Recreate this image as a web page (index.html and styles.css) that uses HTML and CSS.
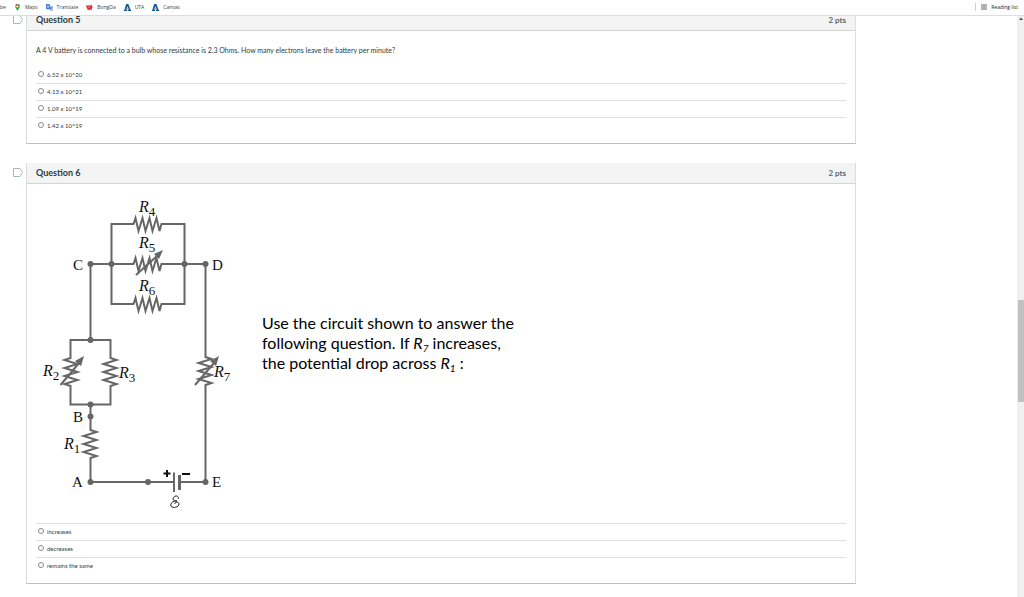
FILE: index.html
```html
<!DOCTYPE html>
<html lang="en">
<head>
    <meta charset="UTF-8">
    <meta name="viewport" content="width=device-width, initial-scale=1.0">
    <title>Quiz</title>
    <link rel="stylesheet" href="styles.css">
</head>
<body>
    <nav class="bookmarks">
        <a href="#" class="bookmark cut">be</a>
        <a href="#" class="bookmark maps">
            <svg class="bookmark-icon" viewBox="0 0 14 16">
                <path d="M7 0a5.500 5.500 0 0 1 5.500 5.500C12.500 9 8.500 11 7 16 5.500 11 1.500 9 1.500 5.500A5.500 5.500 0 0 1 7 0z" fill="#34a853"/>
                <path d="M7 0a5.500 5.500 0 0 1 5.200 3.800L7 5.500z" fill="#4285f4"/>
                <path d="M2.700 2.200L7 5.500 2.600 9C1 6.500 1.200 4 2.700 2.200z" fill="#fbbc04"/>
                <path d="M2.700 2.200A5.500 5.500 0 0 1 7 0v5.500z" fill="#ea4335"/>
                <circle cx="7" cy="5.500" r="2" fill="#fff"/>
            </svg>
            Maps
        </a>
        <a href="#" class="bookmark translate">
            <svg class="bookmark-icon" viewBox="0 0 16 16">
                <path d="M6 4h10v12H9z" fill="#c3cbd8"/>
                <path d="M0 0h8l4 12H0z" fill="#4a80e8"/>
                <path d="M7.500 5.500H4.800v1.200H6.200A2 2 0 1 1 5.800 4.500" fill="none" stroke="#fff"/>
                <path d="M10 8h5M12.500 7v1M14 8c-.5 2-1.500 3-3 4M11.500 9.500l2.500 3" fill="none" stroke="#5f6f88"/>
            </svg>
            Translate
        </a>
        <a href="#" class="bookmark bongda">
            <svg class="bookmark-icon" viewBox="0 0 16 16">
                <path d="M1 3l4 1 2-2 2 2 5-3-1 4 3 2-3 2 1 5-4-2-3 3-2-3-3 1 1-4-3-3z" fill="#e0262c"/>
                <path d="M4 6l3 2 3-2" stroke="#fff" fill="none"/>
            </svg>
            BongDa
        </a>
        <a href="#" class="bookmark uta">
            <svg class="bookmark-icon" viewBox="0 0 16 16">
                <path d="M5 0h5l5 13h1v3H9v-3h2L8 5 5 13h2v3H0v-3h1z" fill="#0b5a9d"/>
                <path d="M8 8l1 2h2l-3 3-3-3h2z" fill="#f08030"/>
            </svg>
            UTA
        </a>
        <a href="#" class="bookmark canvas">
            <svg class="bookmark-icon" viewBox="0 0 16 16">
                <path d="M5 0h5l5 13h1v3H9v-3h2L8 5 5 13h2v3H0v-3h1z" fill="#0b5a9d"/>
                <path d="M8 8l1 2h2l-3 3-3-3h2z" fill="#f08030"/>
            </svg>
            Canvas
        </a>
        <button class="reading-list" type="button">
            <svg class="reading-icon" viewBox="0 0 12 12">
                <path d="M.5.5h11v11H.5z" fill="#d8dade" stroke="#6b6d72"/>
                <path d="M2 4h3M7 4h3M2 8h3M7 8h3M6 1v10" stroke="#55575c"/>
            </svg>
            Reading list
        </button>
    </nav>

    <div class="viewport">
        <main class="quiz">
            <section class="question-row">
                <button class="flag" type="button" aria-label="Flag question 5">
                    <svg viewBox="0 0 10 9"><path d="M.5.5h6.500l2.500 4-2.500 4H.5z"/></svg>
                </button>
                <div class="question">
                    <div class="question-header">
                        <h2>Question 5</h2>
                        <span class="points">2 pts</span>
                    </div>
                    <div class="question-body">
                        <p class="question-text">A 4 V battery is connected to a bulb whose resistance is 2.3 Ohms. How many electrons leave the battery per minute?</p>
                        <div class="answers first-plain">
                            <label class="answer"><input type="radio" name="q5">6.52 x 10^20</label>
                            <label class="answer"><input type="radio" name="q5">4.13 x 10^21</label>
                            <label class="answer"><input type="radio" name="q5">1.09 x 10^19</label>
                            <label class="answer"><input type="radio" name="q5">1.42 x 10^19</label>
                        </div>
                    </div>
                </div>
            </section>

            <section class="question-row">
                <button class="flag" type="button" aria-label="Flag question 6">
                    <svg viewBox="0 0 10 9"><path d="M.5.5h6.500l2.500 4-2.500 4H.5z"/></svg>
                </button>
                <div class="question">
                    <div class="question-header">
                        <h2>Question 6</h2>
                        <span class="points">2 pts</span>
                    </div>
                    <div class="question-body">
                        <div class="figure">
                            <svg class="circuit" viewBox="36 194 204 320">
                                <!-- wires and resistors -->
                                <g class="wire">
                                    <path d="M111.500 264V224H133.500l2-6 3 13 4-13 3 13 4-13 3 13 4-13 3 13 2-7H184.500V304H161.500l-2 7-3-13-4 13-3-13-4 13-3-13-4 13-3-13-2 6H111.500V264"/>
                                    <path d="M90.500 264H133.500l2-6 3 13 4-13 3 13 4-13 3 13 4-13 3 13 2-7H205.500"/>
                                    <path d="M90.500 264V340"/>
                                    <path d="M90.500 340H70.500V358l-6 2 13 4-13 4 13 4-13 4 13 4-13 4 6 2V404.500H110.500V386l6-2-13-4 13-4-13-4 13-4-13-4 13-4-6-2V340H90.500"/>
                                    <path d="M90.500 404.500V430l6 2-13 4 13 4-13 4 13 4-13 4 13 4-6 2V482H173"/>
                                    <path d="M205.500 264V357l6 2-13 4 13 4-13 4 13 4-13 4 13 4-6 2V482H180"/>
                                    <path d="M136 275L157 256M60.500 385L79 363M195 385L214 363"/>
                                    <path d="M174 472.500V492"/>
                                </g>
                                <path class="plate" d="M179.500 475V490"/>
                                <g class="solid">
                                    <path d="M163 250l-4 9-5-5zM84 356l-3 10-6-5zM219 356l-3 10-6-5z"/>
                                    <circle cx="90.500" cy="264" r="3"/>
                                    <circle cx="111.500" cy="264" r="3"/>
                                    <circle cx="184.500" cy="264" r="3"/>
                                    <circle cx="205.500" cy="264" r="3"/>
                                    <circle cx="90.500" cy="340" r="3"/>
                                    <circle cx="90.500" cy="404.500" r="3"/>
                                    <circle cx="90.500" cy="416.500" r="3"/>
                                    <circle cx="90.500" cy="482" r="3"/>
                                    <circle cx="148" cy="482" r="3"/>
                                    <circle cx="205.500" cy="482" r="3"/>
                                </g>
                                <!-- battery polarity -->
                                <path class="sign" d="M163.500 473.500h7M167 470v7M182 474h8"/>
                                <path class="emf" d="M178 499c2-4-5-4-5 0 0 2 3 2 4 2-4 0-7 2-6 5 2 3 8 1 8-2 0-3-5-2-4 0"/>
                                <g class="node">
                                    <text x="73" y="270">C</text>
                                    <text x="212" y="270">D</text>
                                    <text x="73" y="422">B</text>
                                    <text x="72" y="487">A</text>
                                    <text x="212" y="487">E</text>
                                </g>
                                <g class="node">
                                    <text x="139" y="212"><tspan class="r">R</tspan><tspan class="n" dy="4">4</tspan></text>
                                    <text x="139" y="248"><tspan class="r">R</tspan><tspan class="n" dy="4">5</tspan></text>
                                    <text x="139" y="291"><tspan class="r">R</tspan><tspan class="n" dy="4">6</tspan></text>
                                    <text x="43" y="376"><tspan class="r">R</tspan><tspan class="n" dy="4">2</tspan></text>
                                    <text x="119" y="378"><tspan class="r">R</tspan><tspan class="n" dy="4">3</tspan></text>
                                    <text x="214" y="377"><tspan class="r">R</tspan><tspan class="n" dy="4">7</tspan></text>
                                    <text x="64" y="449"><tspan class="r">R</tspan><tspan class="n" dy="4">1</tspan></text>
                                </g>
                            </svg>
                            <p class="prompt">Use the circuit shown to answer the<br>following question. If <i>R<sub>7</sub></i> increases,<br>the potential drop across <i>R<sub>1</sub></i> :</p>
                        </div>
                        <div class="answers">
                            <label class="answer"><input type="radio" name="q6">increases</label>
                            <label class="answer"><input type="radio" name="q6">decreases</label>
                            <label class="answer"><input type="radio" name="q6">remains the same</label>
                        </div>
                    </div>
                </div>
            </section>
        </main>

        <div class="scrollbar">
            <svg class="scroll-arrow" viewBox="0 0 6 6"><path d="M3 1.500L5 4H1z"/></svg>
            <div class="track-above"></div>
            <div class="thumb"></div>
            <div class="track-below"></div>
        </div>
    </div>
</body>
</html>
```
FILE: styles.css
```css
* {
    box-sizing: border-box;
}

body {
    display: flex;
    flex-direction: column;
    height: 100vh;
    margin: 0;
    overflow: hidden;
    font-family: Lato, "Liberation Sans", sans-serif;
    background: #fff;
    color: #2d3b45;
}

button {
    padding: 0;
    border: none;
    background: none;
    font: inherit;
    color: inherit;
    cursor: pointer;
}

/* Bookmarks bar */
.bookmarks {
    display: flex;
    align-items: center;
    gap: 8px;
    flex: none;
    height: 16px;
    padding: 0 6px 1px 0;
    border-bottom: 1px solid #dcdcdc;
    background: #fff;
    font-family: "Open Sans", sans-serif;
    font-size: 5px;
    line-height: 8px;
    color: #3c4043;
    position: relative;
    z-index: 1;
}

.bookmark {
    display: flex;
    align-items: center;
    gap: 4px;
    color: inherit;
    text-decoration: none;
}

.bookmark-icon {
    width: 7px;
    height: 7px;
}

.reading-list {
    display: flex;
    align-items: center;
    gap: 4px;
    margin-left: auto;
    padding-left: 5px;
    border-left: 1px solid #d0d0d0;
    color: #202124;
}

.reading-icon {
    width: 6px;
    height: 6px;
}

/* Page */
.viewport {
    display: flex;
    flex: 1;
    min-height: 0;
    overflow: hidden;
}

.quiz {
    flex: 1;
    margin-top: -6px;
    padding: 0 161px 0 12px;
}

.question-row {
    display: flex;
    align-items: flex-start;
    gap: 3px;
    margin-bottom: 19px;
}

.flag {
    flex: none;
    width: 11px;
    height: 9px;
    margin-top: 5px;
}

.flag svg {
    display: block;
    width: 10px;
    height: 9px;
    margin-left: 1px;
    fill: none;
    stroke: #a3b5bf;
}

.question {
    flex: 1;
    border: 1px solid #dcdcdc;
    border-top: none;
    border-bottom-color: #bfbfbf;
}

.question-header {
    display: flex;
    justify-content: space-between;
    align-items: center;
    height: 21px;
    padding: 0 9px;
    border-bottom: 1px solid #d4d4d4;
    background: #f4f4f4;
}

.question-header h2 {
    margin: 0;
    font-size: 9px;
    line-height: 8px;
}

.points {
    font-size: 8px;
    font-weight: bold;
    line-height: 8px;
    color: #5c666d;
}

.question-body {
    padding: 9px;
}

.question-text {
    margin: 4px 0 10px;
    font-size: 7px;
    line-height: 12px;
}

.answer {
    display: flex;
    align-items: center;
    gap: 3px;
    height: 17px;
    padding: 0 0 2px 2px;
    border-top: 1px solid #dfdfdf;
    font-size: 6px;
}

.first-plain .answer:first-child {
    border-top-color: transparent;
}

.answer input {
    appearance: none;
    width: 6px;
    height: 6px;
    margin: 0;
    border: 1px solid #8a8a8a;
    border-radius: 50%;
    background: #fff;
}

.answer input:checked {
    background: #2d3b45;
}

/* Circuit figure */
.figure {
    display: flex;
    align-items: center;
    gap: 22px;
    padding-top: 1px;
    margin-bottom: 9px;
}

.circuit {
    flex: none;
    width: 204px;
    height: 320px;
}

.wire {
    fill: none;
    stroke: #666;
    stroke-width: 2;
}

.plate {
    stroke: #666;
    stroke-width: 3;
}

.solid {
    fill: #666;
}

.sign {
    stroke: #111;
    stroke-width: 2;
}

.emf {
    fill: none;
    stroke: #222;
}

.node {
    font-family: "Liberation Serif", serif;
    font-size: 15px;
    fill: #111;
}

.r {
    font-style: italic;
    font-size: 16px;
}

.n {
    font-size: 13px;
}

.prompt {
    margin: 0;
    padding-bottom: 22px;
    font-size: 16px;
    line-height: 20px;
    color: #000;
}

.prompt sub {
    font-size: 10px;
    line-height: 0;
    vertical-align: -3px;
}

/* Scrollbar */
.scrollbar {
    display: flex;
    flex-direction: column;
    flex: none;
    width: 7px;
    padding: 0 0 0 1px;
    background: #f0f0f0;
}

.scroll-arrow {
    width: 6px;
    height: 6px;
    fill: #505050;
}

.track-above {
    flex: 278;
}

.thumb {
    flex: 102;
    background: #c1c1c1;
}

.track-below {
    flex: 195;
}
```
